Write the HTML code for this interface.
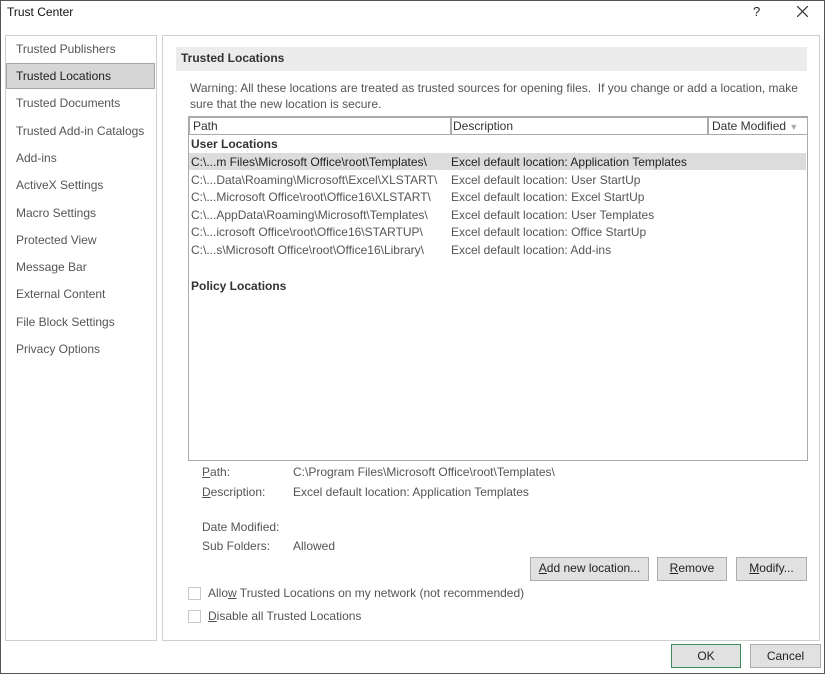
<!DOCTYPE html><html><head><style>
body{margin:0;width:825px;height:674px;background:#fff;font-family:"Liberation Sans",sans-serif;font-size:12px;color:#333;position:relative;overflow:hidden}
.a{position:absolute;white-space:nowrap}
.frame{position:absolute;left:0;top:0;width:823px;height:672px;border:1px solid #555}
.panel{position:absolute;border:1px solid #cfcfcf}
.btn{position:absolute;border:1px solid #adadad;background:#e1e1e1;text-align:center;line-height:21px;color:#222}
.cb{position:absolute;width:11px;height:11px;border:1px solid #c8c8c8;background:#fff}
.nav{left:16px;color:#555}
.r{left:191px;color:#555}.d{left:451px;color:#555}
</style></head><body>
<div class="frame"></div>
<div class="a" style="left:7px;top:5px;color:#111">Trust Center</div>
<div class="a" style="left:753px;top:4px;font-size:13px;color:#222">?</div>
<svg class="a" style="left:797px;top:6px" width="11" height="11"><path d="M0 0L11 11M11 0L0 11" stroke="#333" stroke-width="1.2"/></svg>
<div class="panel" style="left:5px;top:35px;width:150px;height:604px"></div>
<div class="a" style="left:6px;top:63px;width:147px;height:24px;background:#d6d6d6;border:1px solid #a6a6a6"></div>
<div class="a nav" style="top:42px">Trusted Publishers</div>
<div class="a nav" style="top:69px;color:#222">Trusted Locations</div>
<div class="a nav" style="top:96px">Trusted Documents</div>
<div class="a nav" style="top:124px">Trusted Add-in Catalogs</div>
<div class="a nav" style="top:151px">Add-ins</div>
<div class="a nav" style="top:178px">ActiveX Settings</div>
<div class="a nav" style="top:206px">Macro Settings</div>
<div class="a nav" style="top:233px">Protected View</div>
<div class="a nav" style="top:260px">Message Bar</div>
<div class="a nav" style="top:287px">External Content</div>
<div class="a nav" style="top:315px">File Block Settings</div>
<div class="a nav" style="top:342px">Privacy Options</div>
<div class="panel" style="left:162px;top:35px;width:656px;height:604px"></div>
<div class="a" style="left:176px;top:47px;width:631px;height:24px;background:#ececec"></div>
<div class="a" style="left:181px;top:51px;font-weight:bold;color:#333">Trusted Locations</div>
<div class="a" style="left:190px;top:81px;color:#555">Warning: All these locations are treated as trusted sources for opening files.&nbsp; If you change or add a location, make</div>
<div class="a" style="left:190px;top:97px;color:#555">sure that the new location is secure.</div>
<div class="a" style="left:188px;top:116px;width:618px;height:343px;border:1px solid #a9a9a9"></div>
<div class="a" style="left:189px;top:117px;width:258px;height:16px;border:1px solid #aaa;padding-left:3px;line-height:16px">Path</div>
<div class="a" style="left:450px;top:117px;width:254px;height:16px;border:1px solid #aaa;padding-left:2px;line-height:16px">Description</div>
<div class="a" style="left:708px;top:117px;width:95px;height:16px;border:1px solid #aaa;padding-left:3px;line-height:16px">Date Modified <span style="color:#aaa;font-size:9px">▼</span></div>
<div class="a" style="left:191px;top:137px;font-weight:bold">User Locations</div>
<div class="a" style="left:189px;top:153px;width:617px;height:17px;background:#dcdcdc"></div>
<div class="a r" style="top:155px;color:#222">C:\...m Files\Microsoft Office\root\Templates\</div><div class="a d" style="top:155px;color:#222">Excel default location: Application Templates</div>
<div class="a r" style="top:173px">C:\...Data\Roaming\Microsoft\Excel\XLSTART\</div><div class="a d" style="top:173px">Excel default location: User StartUp</div>
<div class="a r" style="top:190px">C:\...Microsoft Office\root\Office16\XLSTART\</div><div class="a d" style="top:190px">Excel default location: Excel StartUp</div>
<div class="a r" style="top:208px">C:\...AppData\Roaming\Microsoft\Templates\</div><div class="a d" style="top:208px">Excel default location: User Templates</div>
<div class="a r" style="top:225px">C:\...icrosoft Office\root\Office16\STARTUP\</div><div class="a d" style="top:225px">Excel default location: Office StartUp</div>
<div class="a r" style="top:243px">C:\...s\Microsoft Office\root\Office16\Library\</div><div class="a d" style="top:243px">Excel default location: Add-ins</div>
<div class="a" style="left:191px;top:279px;font-weight:bold">Policy Locations</div>
<div class="a" style="left:202px;top:465px;color:#555"><u>P</u>ath:</div><div class="a" style="left:293px;top:465px;color:#555">C:\Program Files\Microsoft Office\root\Templates\</div>
<div class="a" style="left:202px;top:485px;color:#555"><u>D</u>escription:</div><div class="a" style="left:293px;top:485px;color:#555">Excel default location: Application Templates</div>
<div class="a" style="left:202px;top:520px;color:#555">Date Modified:</div>
<div class="a" style="left:202px;top:539px;color:#555">Sub Folders:</div><div class="a" style="left:293px;top:539px;color:#555">Allowed</div>
<div class="btn" style="left:530px;top:557px;width:117px;height:22px"><u>A</u>dd new location...</div>
<div class="btn" style="left:657px;top:557px;width:68px;height:22px"><u>R</u>emove</div>
<div class="btn" style="left:736px;top:557px;width:69px;height:22px"><u>M</u>odify...</div>
<div class="cb" style="left:188px;top:587px"></div><div class="a" style="left:208px;top:586px;color:#555">Allo<u>w</u> Trusted Locations on my network (not recommended)</div>
<div class="cb" style="left:188px;top:610px"></div><div class="a" style="left:208px;top:609px;color:#555"><u>D</u>isable all Trusted Locations</div>
<div class="btn" style="left:671px;top:644px;width:68px;height:22px;border:1px solid #3c8a5c;line-height:22px">OK</div>
<div class="btn" style="left:750px;top:644px;width:69px;height:22px;line-height:22px">Cancel</div>
</body></html>
